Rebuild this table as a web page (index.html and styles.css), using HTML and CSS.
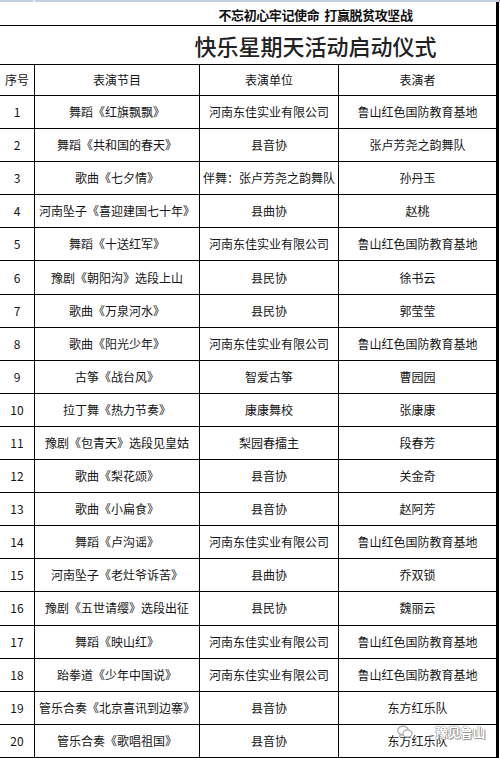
FILE: index.html
```html
<!DOCTYPE html>
<html lang="zh">
<head>
<meta charset="utf-8">
<link rel="stylesheet" href="styles.css">
</head>
<body>
<div class="page">
  <div class="topbar"><span class="tick"></span></div>
  <div class="sheet">
    <div class="t1"><span class="tbox">不忘初心牢记使命&nbsp;&nbsp;打赢脱贫攻坚战</span></div>
    <div class="t2"><span class="tbox">快乐星期天活动启动仪式</span></div>
    <div class="grid">
      <div class="c">序号</div><div class="c">表演节目</div><div class="c">表演单位</div><div class="c">表演者</div>
      <div class="c">1</div><div class="c">舞蹈《红旗飘飘》</div><div class="c">河南东佳实业有限公司</div><div class="c">鲁山红色国防教育基地</div>
      <div class="c">2</div><div class="c">舞蹈《共和国的春天》</div><div class="c">县音协</div><div class="c">张卢芳尧之韵舞队</div>
      <div class="c">3</div><div class="c">歌曲《七夕情》</div><div class="c">伴舞：张卢芳尧之韵舞队</div><div class="c">孙丹玉</div>
      <div class="c">4</div><div class="c">河南坠子《喜迎建国七十年》</div><div class="c">县曲协</div><div class="c">赵桃</div>
      <div class="c">5</div><div class="c">舞蹈《十送红军》</div><div class="c">河南东佳实业有限公司</div><div class="c">鲁山红色国防教育基地</div>
      <div class="c">6</div><div class="c">豫剧《朝阳沟》选段上山</div><div class="c">县民协</div><div class="c">徐书云</div>
      <div class="c">7</div><div class="c">歌曲《万泉河水》</div><div class="c">县民协</div><div class="c">郭莹莹</div>
      <div class="c">8</div><div class="c">歌曲《阳光少年》</div><div class="c">河南东佳实业有限公司</div><div class="c">鲁山红色国防教育基地</div>
      <div class="c">9</div><div class="c">古筝《战台风》</div><div class="c">智爱古筝</div><div class="c">曹园园</div>
      <div class="c">10</div><div class="c">拉丁舞《热力节奏》</div><div class="c">康康舞校</div><div class="c">张康康</div>
      <div class="c">11</div><div class="c">豫剧《包青天》选段见皇姑</div><div class="c">梨园春擂主</div><div class="c">段春芳</div>
      <div class="c">12</div><div class="c">歌曲《梨花颂》</div><div class="c">县音协</div><div class="c">关金奇</div>
      <div class="c">13</div><div class="c">歌曲《小扁食》</div><div class="c">县音协</div><div class="c">赵阿芳</div>
      <div class="c">14</div><div class="c">舞蹈《卢沟谣》</div><div class="c">河南东佳实业有限公司</div><div class="c">鲁山红色国防教育基地</div>
      <div class="c">15</div><div class="c">河南坠子《老灶爷诉苦》</div><div class="c">县曲协</div><div class="c">乔双锁</div>
      <div class="c">16</div><div class="c">豫剧《五世请缨》选段出征</div><div class="c">县民协</div><div class="c">魏丽云</div>
      <div class="c">17</div><div class="c">舞蹈《映山红》</div><div class="c">河南东佳实业有限公司</div><div class="c">鲁山红色国防教育基地</div>
      <div class="c">18</div><div class="c">跆拳道《少年中国说》</div><div class="c">河南东佳实业有限公司</div><div class="c">鲁山红色国防教育基地</div>
      <div class="c">19</div><div class="c">管乐合奏《北京喜讯到边寨》</div><div class="c">县音协</div><div class="c">东方红乐队</div>
      <div class="c">20</div><div class="c">管乐合奏《歌唱祖国》</div><div class="c">县音协</div><div class="c">东方红乐队</div>
    </div>
  </div>
  <div class="watermark">
    <svg class="wm-icon" width="16" height="14" viewBox="0 0 16 14">
      <ellipse cx="6" cy="5.5" rx="5.3" ry="4.3" fill="none" stroke="#a8a8a8" stroke-width="1.2"/>
      <ellipse cx="10.5" cy="8.5" rx="4.5" ry="3.6" fill="#fff" stroke="#a8a8a8" stroke-width="1.2"/>
      <path d="M3 9.5 L2.5 11.8 L5 10" fill="none" stroke="#a8a8a8" stroke-width="1"/>
    </svg>
    <span class="wm-text">豫见鲁山</span>
  </div>
</div>
</body>
</html>
```

FILE: styles.css
```css
html, body {
  margin: 0;
  padding: 0;
  background: #fff;
}
.page {
  position: relative;
  width: 500px;
  height: 758px;
  overflow: hidden;
  font-family: "Noto Sans CJK SC", "Noto Sans", sans-serif;
  color: #111;
}
.topbar {
  height: 2px;
  width: 499px;
  background: #c7cede;
  border-right: 1px solid #9aa0aa;
  position: relative;
}
.tick {
  display: block;
  margin-left: 33px;
  width: 2px;
  height: 2px;
  background: #e8ebf2;
}
.sheet {
  width: 496px;
  border-right: 3px solid #000;
}
.t1 {
  height: 23px;
  border-bottom: 1px solid #000;
  display: flex;
  align-items: center;
}
.t2 {
  height: 38px;
  border-bottom: 1px solid #000;
  display: flex;
  align-items: center;
}
.tbox {
  margin-left: 135px;
  width: 361px;
  text-align: center;
  white-space: nowrap;
}
.t1 .tbox {
  font-size: 13px;
  font-weight: 700;
  letter-spacing: -0.4px;
  line-height: 23px;
  padding-top: 1px;
}
.t2 .tbox {
  font-size: 22px;
  font-weight: 500;
  line-height: 38px;
  color: #222;
}
.grid {
  display: grid;
  grid-template-columns: 34px 164px 138px 157px;
  grid-template-rows: 30px repeat(20, 32.1px);
  gap: 1px;
  background: #000;
  border-bottom: 1px solid #000;
}
.c {
  background: #fff;
  display: flex;
  align-items: center;
  justify-content: center;
  font-size: 12px;
  line-height: 14px;
  white-space: nowrap;
  color: #151515;
}
.watermark {
  position: absolute;
  left: 397px;
  top: 722px;
  display: flex;
  align-items: center;
  gap: 22px;
}
.wm-icon {
  display: block;
}
.wm-text {
  font-size: 13px;
  color: #fff;
  font-weight: 700;
  text-shadow: 0 0 1px #777, 0 0 1px #777, 1px 1px 1px #999;
  letter-spacing: -0.5px;
}
```
